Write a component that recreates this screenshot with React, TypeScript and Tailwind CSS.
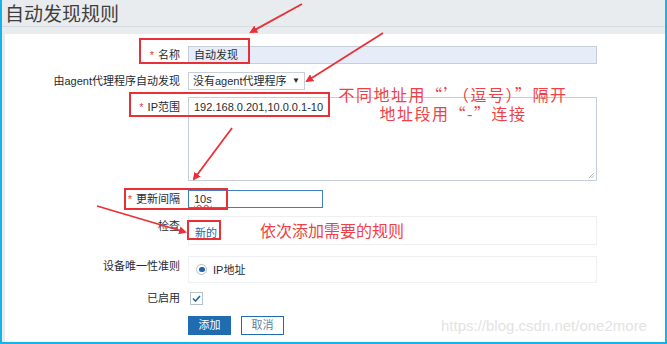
import React from "react";

const cjk = "font-['Liberation_Sans','Noto_Sans_CJK_SC',sans-serif]";

function Label({ text, required, className = "" }: { text: string; required?: boolean; className?: string }) {
  return (
    <div className={`w-[175px] shrink-0 text-right text-[11px] leading-[14px] text-[#1f2c33] ${className}`}>
      {required && <span className="text-[#d64541] mr-[4px]">*</span>}
      {text}
    </div>
  );
}

export default function App() {
  return (
    <div lang="zh-CN" className={`relative w-[667px] h-[344px] overflow-hidden bg-white border-x-2 border-b-2 border-[#16b2ea] ${cjk}`}>
      <div className="flex flex-col h-full bg-[#e9ecef]">
        {/* Header */}
        <div className="h-[26px] pl-[3px] flex items-center">
          <h1 className="text-[19px] leading-[24px] text-[#3e3e3e] font-['Noto_Sans_CJK_SC',sans-serif]">自动发现规则</h1>
        </div>
        <div className="h-px bg-[#d8dbde]" />
        <div className="h-[7px]" />

        {/* Form */}
        <div className="flex-1 ml-[3px] bg-white pt-[12px] flex flex-col">
          <div className="flex items-center gap-[8px]">
            <Label text="名称" required />
            <div className="w-[409px] h-[18px] border border-[#c6cfd9] bg-[#e7edf8] px-[5px] text-[11px] leading-[16px] text-[#1f2c33]">
              自动发现
            </div>
          </div>

          <div className="flex items-center gap-[8px] mt-[8px]">
            <Label text="由agent代理程序自动发现" />
            <div className="w-[117px] h-[18px] border border-[#c6cfd9] px-[4px] flex items-center justify-between text-[11px] leading-[16px] text-[#1f2c33]">
              <span>没有agent代理程序</span>
              <span className="text-[8px]">▼</span>
            </div>
          </div>

          <div className="flex gap-[8px] mt-[7px]">
            <Label text="IP范围" required className="pt-[3px]" />
            <div className="relative w-[409px] h-[84px] border border-[#c6cfd9] px-[5px] pt-[2px] text-[11px] leading-[14px] text-[#1f2c33]">
              192.168.0.201,10.0.0.1-10
              <svg className="absolute right-[1px] bottom-[1px]" width="7" height="7" viewBox="0 0 7 7">
                <path d="M6 1L1 6M6 3.5L3.5 6" stroke="#9aa3ab" strokeWidth="0.8" />
              </svg>
            </div>
          </div>

          <div className="flex items-center gap-[8px] mt-[9px]">
            <Label text="更新间隔" required />
            <div className="w-[135px] h-[18px] border border-[#3f7fc0] px-[5px] text-[11px] leading-[16px] text-[#1f2c33]">
              <span className="underline decoration-wavy decoration-[#e04040] underline-offset-1">10s</span>
            </div>
          </div>

          <div className="flex gap-[8px] mt-[8px]">
            <Label text="检查" className="pt-[3px]" />
            <div className="w-[409px] h-[29px] border border-[#edf0f2] pl-[6px] pt-[3px]">
              <span className="text-[11px] leading-[14px] text-[#1f65a6] underline decoration-dotted underline-offset-2">新的</span>
            </div>
          </div>

          <div className="flex gap-[8px] mt-[11px]">
            <Label text="设备唯一性准则" className="pt-[3px]" />
            <div className="w-[409px] h-[27px] border border-[#edf0f2] pl-[7px] flex items-center gap-[6px]">
              <span className="w-[11px] h-[11px] rounded-full border border-[#b8c2cc] flex items-center justify-center">
                <span className="w-[6px] h-[5px] rounded-full bg-[#1f65a6]" />
              </span>
              <span className="text-[11px] leading-[14px] text-[#1f2c33]">IP地址</span>
            </div>
          </div>

          <div className="flex items-center gap-[8px] mt-[8px]">
            <Label text="已启用" />
            <div className="w-[13px] h-[13px] ml-[2px] border border-[#b8c2cc] flex items-center justify-center">
              <svg width="9" height="7" viewBox="0 0 9 7">
                <path d="M1 3.5L3.5 6L8 1" fill="none" stroke="#1f65a6" strokeWidth="1.6" />
              </svg>
            </div>
          </div>

          <div className="flex gap-[10px] mt-[11px] ml-[183px]">
            <div className="w-[43px] h-[19px] bg-[#1f6cb0] text-white text-[11px] leading-[19px] text-center">添加</div>
            <div className="w-[43px] h-[19px] border border-[#1f6cb0] text-[#5d7fa5] text-[11px] leading-[17px] text-center">取消</div>
          </div>
        </div>
      </div>

      {/* Annotations */}
      <svg className="absolute left-[-2px] top-0 pointer-events-none" width="667" height="344" viewBox="0 0 667 344">
        <defs>
          <marker id="ah" markerWidth="8" markerHeight="8" refX="6" refY="4" orient="auto" markerUnits="userSpaceOnUse">
            <path d="M0 0L8 4L0 8Z" fill="#ea3037" />
          </marker>
        </defs>
        <g fill="none" stroke="#ea3037" strokeWidth="2">
          <rect x="140" y="39" width="109" height="24" />
          <rect x="130" y="93" width="199" height="23" />
          <rect x="125" y="189" width="102" height="20" />
          <rect x="188" y="221" width="32" height="18" />
        </g>
        <g stroke="#ea3037" strokeWidth="1.8" markerEnd="url(#ah)">
          <line x1="302" y1="4" x2="251" y2="32" />
          <line x1="383" y1="33" x2="307" y2="81" />
          <line x1="232" y1="128" x2="194" y2="179" />
          <line x1="97" y1="206" x2="185" y2="232" />
        </g>
      </svg>

      <div className="absolute left-[311px] top-[85px] w-[280px] text-center whitespace-nowrap tracking-[1.5px] text-[16px] leading-[19px] text-[#ef3f47] font-['Noto_Sans_CJK_SC',sans-serif]">
        <div>不同地址用“’（逗号）”隔开</div>
        <div>地址段用“-”连接</div>
      </div>
      <div className="absolute left-[258px] top-[220px] whitespace-nowrap text-[16px] leading-[20px] text-[#ef3f47] font-['Noto_Sans_CJK_SC',sans-serif]">
        依次添加需要的规则
      </div>
      <div className="absolute left-[439px] top-[317px] text-[15px] leading-[18px] text-[#e3e3e3] font-['Liberation_Sans',sans-serif]">
        https://blog.csdn.net/one2more
      </div>
    </div>
  );
}
